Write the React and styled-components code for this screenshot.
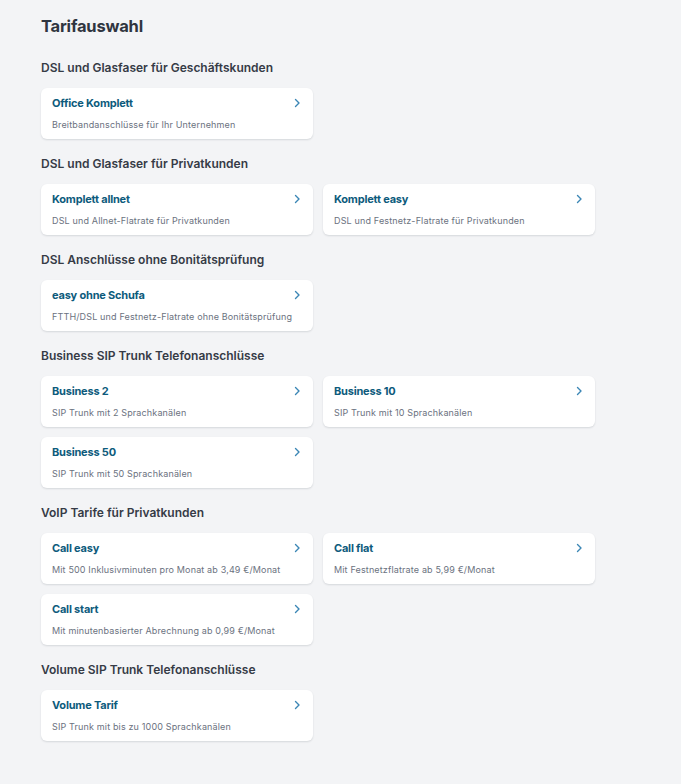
import React from "react";
import styled, { createGlobalStyle } from "styled-components";

const GlobalStyle = createGlobalStyle`
  html, body {
    margin: 0;
    background: #f3f4f6;
  }
  body {
    font-family: Inter, "Noto Sans", sans-serif;
    -webkit-font-smoothing: antialiased;
  }
`;

const sections = [
  {
    title: "DSL und Glasfaser für Geschäftskunden",
    items: [
      { name: "Office Komplett", text: "Breitbandanschlüsse für Ihr Unternehmen" },
    ],
  },
  {
    title: "DSL und Glasfaser für Privatkunden",
    items: [
      { name: "Komplett allnet", text: "DSL und Allnet-Flatrate für Privatkunden" },
      { name: "Komplett easy", text: "DSL und Festnetz-Flatrate für Privatkunden" },
    ],
  },
  {
    title: "DSL Anschlüsse ohne Bonitätsprüfung",
    items: [
      { name: "easy ohne Schufa", text: "FTTH/DSL und Festnetz-Flatrate ohne Bonitätsprüfung" },
    ],
  },
  {
    title: "Business SIP Trunk Telefonanschlüsse",
    items: [
      { name: "Business 2", text: "SIP Trunk mit 2 Sprachkanälen" },
      { name: "Business 10", text: "SIP Trunk mit 10 Sprachkanälen" },
      { name: "Business 50", text: "SIP Trunk mit 50 Sprachkanälen" },
    ],
  },
  {
    title: "VoIP Tarife für Privatkunden",
    items: [
      { name: "Call easy", text: "Mit 500 Inklusivminuten pro Monat ab 3,49 €/Monat" },
      { name: "Call flat", text: "Mit Festnetzflatrate ab 5,99 €/Monat" },
      { name: "Call start", text: "Mit minutenbasierter Abrechnung ab 0,99 €/Monat" },
    ],
  },
  {
    title: "Volume SIP Trunk Telefonanschlüsse",
    items: [
      { name: "Volume Tarif", text: "SIP Trunk mit bis zu 1000 Sprachkanälen" },
    ],
  },
];

function Chevron() {
  return (
    <svg width="8" height="10" viewBox="0 0 8 10" fill="none">
      <path
        d="M2.5 1.5 L6 5 L2.5 8.5"
        stroke="#3b86b5"
        strokeWidth="1.4"
        strokeLinecap="round"
        strokeLinejoin="round"
      />
    </svg>
  );
}

export default function App() {
  return (
    <>
      <GlobalStyle />
      <Page>
        <PageTitle>Tarifauswahl</PageTitle>
        {sections.map((section) => (
          <Section key={section.title}>
            <SectionTitle>{section.title}</SectionTitle>
            <CardGrid>
              {section.items.map((item) => (
                <Card key={item.name} href="#">
                  <CardHead>
                    <CardName>{item.name}</CardName>
                    <Chevron />
                  </CardHead>
                  <CardText>{item.text}</CardText>
                </Card>
              ))}
            </CardGrid>
          </Section>
        ))}
      </Page>
    </>
  );
}

const Page = styled.div`
  padding: 14px 41px 40px;
  min-height: 784px;
  box-sizing: border-box;
`;

const PageTitle = styled.h1`
  margin: 0 0 5px;
  font-size: 16.5px;
  line-height: 24px;
  font-weight: 700;
  letter-spacing: -0.2px;
  color: #2f3540;
`;

const Section = styled.section`
  padding-top: 17px;
`;

const SectionTitle = styled.h2`
  margin: 0 0 12px;
  font-size: 12px;
  line-height: 16px;
  font-weight: 600;
  color: #363b46;
`;

const CardGrid = styled.div`
  display: grid;
  grid-template-columns: repeat(2, 272px);
  gap: 10px;
`;

const Card = styled.a`
  display: flex;
  flex-direction: column;
  gap: 9px;
  height: 51px;
  box-sizing: border-box;
  padding: 8px 12px 8px 11px;
  background: #ffffff;
  border-radius: 6px;
  box-shadow: 0 1px 2px rgba(30, 40, 60, 0.14);
  text-decoration: none;
`;

const CardHead = styled.div`
  display: flex;
  align-items: center;
  justify-content: space-between;
  height: 14px;
`;

const CardName = styled.span`
  font-size: 11px;
  line-height: 14px;
  font-weight: 700;
  letter-spacing: -0.2px;
  color: #0d5b7c;
`;

const CardText = styled.span`
  font-size: 9px;
  line-height: 12px;
  letter-spacing: 0.15px;
  color: #6b7280;
`;
